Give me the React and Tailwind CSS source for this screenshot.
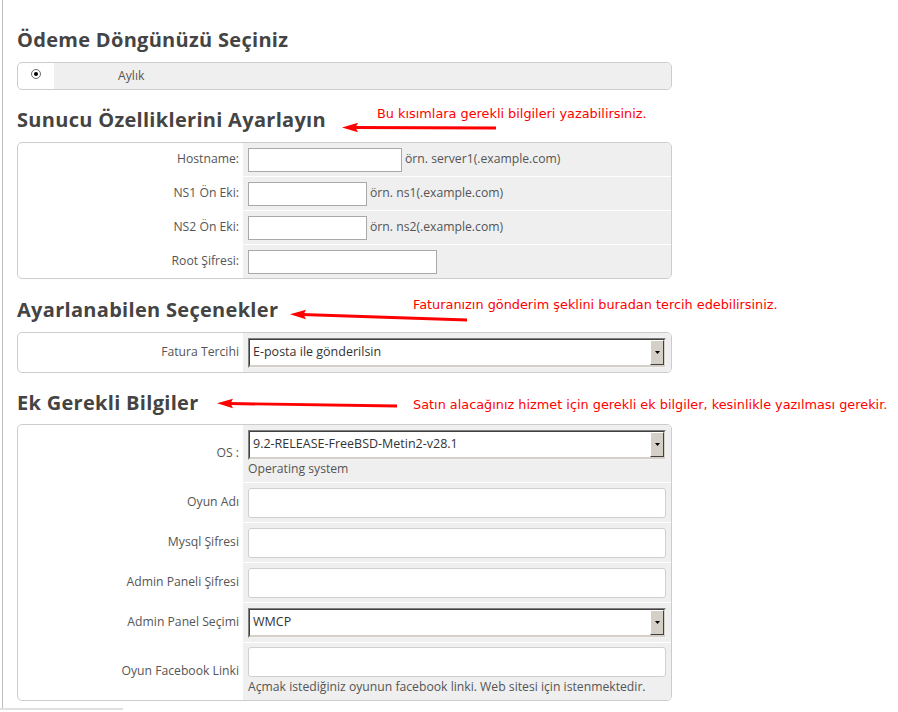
import React from 'react';

const Label = ({ children }) => (
  <div className="w-[225px] shrink-0 flex items-center justify-end pr-[4px] text-[12.2px] text-[#555]">
    {children}
  </div>
);

const Radio = () => (
  <svg width="10" height="10" viewBox="0 0 10 10">
    <circle cx="5" cy="5" r="4.5" fill="#fff" stroke="#6b6b6b" strokeWidth="1" />
    <circle cx="5" cy="5" r="2" fill="#000" />
  </svg>
);

const TextInput = ({ w }) => (
  <div className={`h-[24px] border border-[#a9a9a9] bg-white ${w}`} />
);

const WideInput = () => (
  <div className="w-[418px] h-[30px] rounded-[3px] border border-[#cfcfcf] bg-white" />
);

const Select = ({ value }) => (
  <div className="flex w-[418px] h-[30px] border-t border-l border-[#808080] border-r border-b border-r-[#f4f4f4] border-b-[#f4f4f4]">
    <div className="flex flex-1 border-t border-l border-[#404040] border-r border-b-2 border-r-[#d4d0c8] border-b-[#d4d0c8] bg-white">
      <div className="flex-1 flex items-center pl-[3px] text-[12.5px] text-[#333]">{value}</div>
      <div className="w-[14px] flex items-center justify-center bg-[#d4d0c8] border-l border-t border-white border-r border-b border-r-[#404040] border-b-[#404040]">
        <svg width="5" height="3" viewBox="0 0 5 3">
          <path d="M0 0h5L2.5 3z" fill="#000" />
        </svg>
      </div>
    </div>
  </div>
);

const Heading = ({ children, className }) => (
  <h2 className={`h-[24px] leading-[24px] text-[20px] tracking-[0.3px] font-bold text-[#444] ${className}`}>{children}</h2>
);

const Box = ({ children }) => (
  <div className="w-[655px] rounded-[5px] border border-[#cccccc] overflow-hidden flex flex-col gap-px bg-white">
    {children}
  </div>
);

const Hint = ({ children }) => (
  <span className="ml-[3px] text-[12.2px] text-[#555]">{children}</span>
);

// kırmızı açıklama yazıları
const Note = ({ className, children }) => (
  <div className={`absolute leading-[18px] text-[12.85px] text-[#ff0000] font-['DejaVu_Sans',sans-serif] whitespace-nowrap ${className}`}>
    {children}
  </div>
);

export default function App() {
  return (
    <div className="relative w-[898px] h-[712px] overflow-hidden bg-white font-['Open_Sans',sans-serif]">
      <div className="ml-[2px] h-[708px] border-l border-[#bdbdbd] pl-[14px] pt-[28px]">
        <Heading className="mb-[10px]">Ödeme Döngünüzü Seçiniz</Heading>
        <Box>
          <div className="flex h-[26px]">
            <div className="w-[36px] shrink-0 flex items-center justify-center pb-[4px]">
              <Radio />
            </div>
            <div className="flex-1 bg-[#efefef] flex items-center pl-[64px] text-[12.2px] text-[#555]">Aylık</div>
          </div>
        </Box>

        <Heading className="mt-[18px] mb-[10px]">Sunucu Özelliklerini Ayarlayın</Heading>
        <Box>
          <div className="flex h-[33px]">
            <Label>Hostname:</Label>
            <div className="flex-1 bg-[#efefef] flex items-center pl-[5px]">
              <TextInput w="w-[154px]" />
              <Hint>örn. server1(.example.com)</Hint>
            </div>
          </div>
          <div className="flex h-[33px]">
            <Label>NS1 Ön Eki:</Label>
            <div className="flex-1 bg-[#efefef] flex items-center pl-[5px]">
              <TextInput w="w-[119px]" />
              <Hint>örn. ns1(.example.com)</Hint>
            </div>
          </div>
          <div className="flex h-[33px]">
            <Label>NS2 Ön Eki:</Label>
            <div className="flex-1 bg-[#efefef] flex items-center pl-[5px]">
              <TextInput w="w-[119px]" />
              <Hint>örn. ns2(.example.com)</Hint>
            </div>
          </div>
          <div className="flex h-[33px]">
            <Label>Root Şifresi:</Label>
            <div className="flex-1 bg-[#efefef] flex items-center pl-[5px]">
              <TextInput w="w-[189px]" />
            </div>
          </div>
        </Box>

        <Heading className="mt-[19px] mb-[10px]">Ayarlanabilen Seçenekler</Heading>
        <Box>
          <div className="flex h-[39px]">
            <Label>Fatura Tercihi</Label>
            <div className="flex-1 bg-[#efefef] flex items-center pl-[5px]">
              <Select value="E-posta ile gönderilsin" />
            </div>
          </div>
        </Box>

        <Heading className="mt-[18px] mb-[9px]">Ek Gerekli Bilgiler</Heading>
        <Box>
          <div className="flex h-[57px]">
            <Label>OS :</Label>
            <div className="flex-1 bg-[#efefef] flex flex-col pl-[5px] pt-[5px]">
              <Select value="9.2-RELEASE-FreeBSD-Metin2-v28.1" />
              <div className="leading-[18px] text-[12.2px] text-[#555]">Operating system</div>
            </div>
          </div>
          <div className="flex h-[39px]">
            <Label>Oyun Adı</Label>
            <div className="flex-1 bg-[#efefef] flex items-center pl-[5px]">
              <WideInput />
            </div>
          </div>
          <div className="flex h-[39px]">
            <Label>Mysql Şifresi</Label>
            <div className="flex-1 bg-[#efefef] flex items-center pl-[5px]">
              <WideInput />
            </div>
          </div>
          <div className="flex h-[39px]">
            <Label>Admin Paneli Şifresi</Label>
            <div className="flex-1 bg-[#efefef] flex items-center pl-[5px]">
              <WideInput />
            </div>
          </div>
          <div className="flex h-[39px]">
            <Label>Admin Panel Seçimi</Label>
            <div className="flex-1 bg-[#efefef] flex items-center pl-[5px]">
              <Select value="WMCP" />
            </div>
          </div>
          <div className="flex h-[57px]">
            <Label>Oyun Facebook Linki</Label>
            <div className="flex-1 bg-[#efefef] flex flex-col pl-[5px] pt-[4px]">
              <WideInput />
              <div className="mt-px leading-[18px] text-[12.2px] text-[#555]">
                Açmak istediğiniz oyunun facebook linki. Web sitesi için istenmektedir.
              </div>
            </div>
          </div>
        </Box>
      </div>
      <div className="w-[123px] h-[2px] bg-[#e0e0e0]" />

      {/* ekran görüntüsünün üstüne çizilmiş oklar */}
      <svg className="absolute inset-0 pointer-events-none" width="898" height="712">
        <g fill="#ff0000" stroke="none">
          <path d="M496 126.6 L355 126 L355 129 L496 129.6 Z" />
          <path d="M342 127.4 L358 122.8 L355.5 127.5 L358 132.2 Z" />
          <path d="M467 318.6 L302 313 L302 316 L467 321.4 Z" />
          <path d="M290 314.3 L306 309.8 L303.5 314.5 L306 319.2 Z" />
          <path d="M397 404.6 L229 402 L229 405 L397 407.4 Z" />
          <path d="M217 403.3 L233 398.8 L230.5 403.5 L233 408.2 Z" />
        </g>
      </svg>
      <Note className="left-[377px] top-[105px]">Bu kısımlara gerekli bilgileri yazabilirsiniz.</Note>
      <Note className="left-[413px] top-[296px]">Faturanızın gönderim şeklini buradan tercih edebilirsiniz.</Note>
      <Note className="left-[413px] top-[396px]">
        Satın alacağınız hizmet için gerekli ek bilgiler, kesinlikle yazılması gerekir.
      </Note>
    </div>
  );
}
